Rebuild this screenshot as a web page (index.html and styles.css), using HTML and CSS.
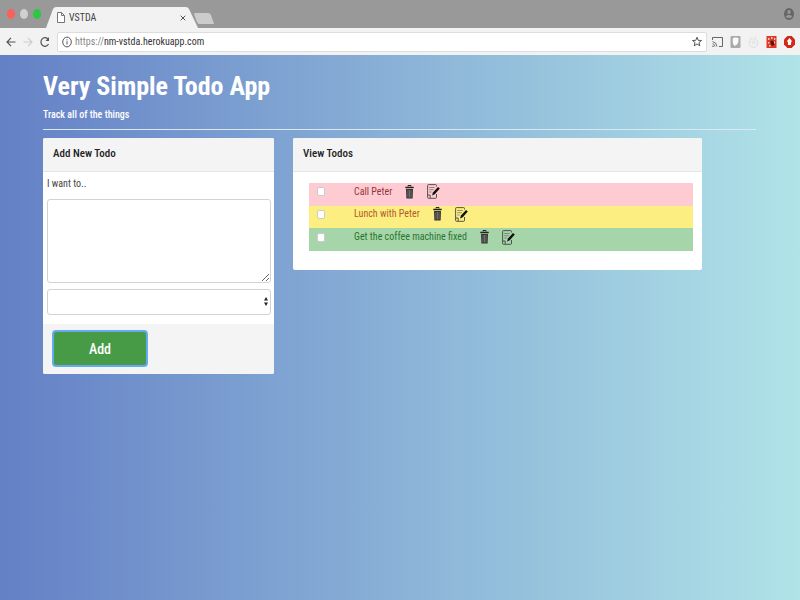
FILE: index.html
```html
<!DOCTYPE html>
<html lang="en">
<head>
<meta charset="utf-8">
<title>VSTDA</title>
<link rel="stylesheet" href="styles.css">
</head>
<body>
<svg class="defs" aria-hidden="true">
  <symbol id="trash" viewBox="0 0 9 14">
    <path d="M3 1.500V.5h3v1" fill="none" stroke="#222"/>
    <path d="M.3 1.700h8.400v1.600H.3z" fill="#222"/>
    <path d="M1 4h7l-.4 9.500H1.400z" fill="#333"/>
    <path d="M3 5v7.500M4.500 5v7.500M6 5v7.500" stroke="#fff" stroke-opacity=".5" stroke-width=".6"/>
  </symbol>
  <symbol id="edit" viewBox="0 0 13 15">
    <path d="M9.500 2.500V1.500Q9.500.6 8.600.6H1.500Q.6.6.6 1.500V13.400q0 .9.9.9h7.100q.9 0 .9-.9V10M.8 11h2.400v3" fill="none" stroke="#444" stroke-width=".9"/>
    <path d="M2.200 3.500h5.500M2.200 5.700h4.500M2.200 8h2.500" stroke="#666" stroke-width=".7"/>
    <path d="M11 3l1.800 1.600-5 5.600-2.700 1.300.8-2.900z" fill="#111"/>
  </symbol>
</svg>
<header class="browser">
  <div class="tabs">
    <span class="light red"></span><span class="light grey"></span><span class="light green"></span>
    <div class="tab">
      <svg class="tab-shape" viewBox="0 0 152 20" preserveAspectRatio="none" aria-hidden="true"><path d="M0 20L7 2q1-2 3-2h130q2 0 3 2l9 18z" fill="#f2f2f2"/></svg>
      <svg class="page-icon" viewBox="0 0 8 11" aria-hidden="true"><path d="M.5.500h4l3 3v7h-7zM4.500.500v3h3" fill="#fff" stroke="#777"/></svg>
      <span class="tab-title">VSTDA</span>
      <button class="close" aria-label="Close tab"><svg width="6" height="6" viewBox="0 0 6 6"><path d="M.7.700l4.600 4.600M5.300.700L.7 5.300" stroke="#555"/></svg></button>
    </div>
    <button class="new-tab" aria-label="New tab"><svg width="20" height="11" viewBox="0 0 20 11"><path d="M1 0h13q2 0 3 2l3 9H5q-1 0-2-2L0 1z" fill="#ccc"/></svg></button>
    <svg class="user" viewBox="0 0 10 12" aria-hidden="true"><ellipse cx="5" cy="6" rx="5" ry="6" fill="#666"/><ellipse cx="5" cy="4" rx="1.600" ry="1.900" fill="#999"/><path d="M1.800 9q.2-2 3.200-2t3.200 2q-3.200 2-6.400 0" fill="#999"/></svg>
  </div>
  <div class="toolbar">
    <svg class="nav" viewBox="0 0 10 10" aria-hidden="true"><path d="M9.500 5h-8M5 .8L1 5l4 4.200" fill="none" stroke="#555" stroke-width="1.200"/></svg>
    <svg class="nav" viewBox="0 0 10 10" aria-hidden="true"><path d="M.5 5h8M5 .8L9 5 5 9.200" fill="none" stroke="#ccc" stroke-width="1.200"/></svg>
    <svg class="nav" viewBox="0 0 10 10" aria-hidden="true"><path d="M8.500 7A4 4.300 0 1 1 7.800 2" fill="none" stroke="#555" stroke-width="1.200"/><path d="M9 0v4H5.500z" fill="#555"/></svg>
    <div class="address">
      <svg class="info" viewBox="0 0 10 12" aria-hidden="true"><ellipse cx="5" cy="6" rx="4.300" ry="4.900" fill="none" stroke="#555"/><path d="M5 5.300v3.200M5 3.300v1.100" stroke="#555"/></svg>
      <span class="url"><span class="scheme">https://</span>nm-vstda.herokuapp.com</span>
      <svg class="star" viewBox="0 0 10 10" aria-hidden="true"><path d="M5 .8l1.200 3 3.300.2L7 6l.8 3.300L5 7.500 2.200 9.300 3 6 .5 4l3.300-.2z" fill="none" stroke="#444" stroke-width=".9"/></svg>
    </div>
    <div class="extensions">
      <svg class="ext" viewBox="0 0 11 12" aria-hidden="true"><path d="M.5 4V1.500h10v9H7" fill="none" stroke="#666"/><path d="M.5 5.500q4 .5 4.500 5M.5 7.500q2 .5 2.500 3" fill="none" stroke="#666" stroke-width=".9"/><circle cx="1" cy="10.200" r=".8" fill="#666"/></svg>
      <svg class="ext" viewBox="0 0 11 12" aria-hidden="true"><rect x=".5" width="10" height="12" rx="1" fill="#aaa"/><path d="M3 2q2.500-.8 5.500 0 .5 4-1.500 6.500L4.500 10Q2 7 3 2" fill="#fafafa"/></svg>
      <svg class="ext" viewBox="0 0 11 12" aria-hidden="true"><g fill="none" stroke="#ddd"><circle cx="5.500" cy="7" r="4.300"/><circle cx="5.500" cy="6.500" r="1.500"/><path d="M1.500 1l2 2M7 1.500l1.500-1"/></g></svg>
      <svg class="ext" viewBox="0 0 11 12" aria-hidden="true"><path d="M.5 0h10v12H.5z" fill="#df3827"/><path d="M2 2h1.500v2H2zM5 1h1.500v2H5zM8 2h1.300v2H8zM2 6h1.500v1.500H2zM8 5.500h1v2H8zM3 9h1.500v1.500H3z" fill="#f8c4bd"/><path d="M4.500 5L7 4.500l1.500 4L6 10 4.500 7z" fill="#4a1712"/></svg>
      <svg class="ext" viewBox="0 0 11 12" aria-hidden="true"><path d="M3.300 0h4.400L11 3.500v5L7.700 12H3.300L0 8.500v-5z" fill="#cf2919"/><path d="M5.500 2l2.800 3.500H7.200L7 9H4l-.2-3.500H2.700z" fill="#fff"/></svg>
    </div>
  </div>
</header>
<main class="page">
  <h1>Very Simple Todo App</h1>
  <p class="tagline">Track all of the things</p>
  <hr>
  <div class="columns">
    <form class="card">
      <h2>Add New Todo</h2>
      <div class="fields">
        <label for="todo">I want to..</label>
        <textarea id="todo"></textarea>
        <div class="select-wrap">
          <select id="priority" aria-label="Priority"><option></option></select>
          <svg class="arrows" viewBox="0 0 4 9" aria-hidden="true"><path d="M2 0l2 3.500H0zM2 9L0 5.500h4z" fill="#222"/></svg>
        </div>
      </div>
      <div class="card-footer"><button class="add" type="button">Add</button></div>
    </form>
    <section class="card">
      <h2>View Todos</h2>
      <ul class="todos">
        <li class="high"><input type="checkbox" id="t1"><label for="t1">Call Peter</label><button aria-label="Delete"><svg class="trash"><use href="#trash"/></svg></button><button aria-label="Edit"><svg class="edit"><use href="#edit"/></svg></button></li>
        <li class="medium"><input type="checkbox" id="t2"><label for="t2">Lunch with Peter</label><button aria-label="Delete"><svg class="trash"><use href="#trash"/></svg></button><button aria-label="Edit"><svg class="edit"><use href="#edit"/></svg></button></li>
        <li class="low"><input type="checkbox" id="t3"><label for="t3">Get the coffee machine fixed</label><button aria-label="Delete"><svg class="trash"><use href="#trash"/></svg></button><button aria-label="Edit"><svg class="edit"><use href="#edit"/></svg></button></li>
      </ul>
    </section>
  </div>
</main>
</body>
</html>
```
FILE: styles.css
```css
* { box-sizing: border-box; }
body {
  margin: 0;
  min-height: 100vh;
  display: flex;
  flex-direction: column;
  font: 10px/16px "Roboto Condensed", Roboto, sans-serif;
  color: #444;
}
button { padding: 0; border: 0; background: none; font: inherit; }
svg { display: block; flex: none; }
.defs { position: absolute; width: 0; height: 0; }

.tabs {
  display: flex;
  align-items: center;
  height: 28px;
  padding: 0 6px 0 7px;
  background: #999;
}
.light { width: 8px; height: 10px; margin-right: 5px; border-radius: 50%; }
.red { background: #fc605b; }
.grey { background: #d0d0d0; }
.green { background: #2bc840; }
.tab {
  position: relative;
  display: flex;
  align-items: center;
  align-self: flex-end;
  width: 152px;
  height: 21px;
  padding: 0 12px 0 11px;
}
.tab-shape { position: absolute; inset: 0; width: 100%; height: 100%; }
.page-icon { position: relative; width: 8px; height: 11px; }
.tab-title { position: relative; margin-left: 4px; }
.close { position: relative; margin-left: auto; }
.new-tab { margin: 8px 0 0 -4px; }
.user { width: 10px; height: 12px; margin-left: auto; }

.toolbar {
  display: flex;
  align-items: center;
  gap: 7px;
  height: 27px;
  padding: 0 6px;
  background: #f2f2f2;
}
.nav { width: 10px; height: 10px; }
.address {
  flex: 1;
  display: flex;
  align-items: center;
  height: 20px;
  padding: 0 4px;
  border: 1px solid #ddd;
  border-radius: 2px;
  background: #fff;
}
.info { width: 10px; height: 12px; }
.url { margin-left: 3px; color: #333; }
.scheme { color: #888; }
.star { width: 10px; height: 11px; margin-left: auto; }
.extensions { display: flex; gap: 7px; margin: 0 -1px 0 -2px; }
.ext { width: 11px; height: 12px; }

.page {
  flex: 1;
  padding: 15px 44px 0 43px;
  background: linear-gradient(to right, #6480c6, #b0e3e8);
}
h1 { margin: 0; font-size: 26px; line-height: 32px; font-weight: 700; color: #fff; }
.tagline { margin: 5px 0 6px; color: #fff; font-weight: 500; }
hr { height: 1px; margin: 0 0 8px; border: 0; background: #d9e8f5; }
.columns {
  display: grid;
  grid-template-columns: 231fr 409fr 35fr;
  gap: 19px;
  align-items: start;
}
.card { border-radius: 2px; background: #fff; overflow: hidden; }
h2 {
  margin: 0;
  padding: 8px 10px 9px;
  border-bottom: 1px solid #e6e6e6;
  background: #f4f4f4;
  color: #222;
  font-size: 11px;
  font-weight: 500;
  line-height: 16px;
}
.fields { padding: 4px 3px 9px 4px; }
.fields label { display: block; margin-bottom: 7px; }
textarea, select {
  display: block;
  width: 100%;
  border: 1px solid #d2d2d2;
  border-radius: 3px;
  background: #fff;
}
textarea { height: 84px; resize: vertical; }
.select-wrap { position: relative; margin-top: 6px; }
select { height: 26px; appearance: none; }
.arrows { position: absolute; right: 3px; top: 8px; width: 4px; height: 9px; }
.card-footer { padding: 6px 9px 7px; background: #f4f4f4; }
.add {
  display: block;
  width: 96px;
  height: 37px;
  border: 2px solid #66abf2;
  border-radius: 4px;
  background: #479b47;
  color: #fff;
  font-size: 14px;
  font-weight: 500;
}
.todos {
  display: grid;
  grid-auto-rows: 1fr;
  height: 68px;
  margin: 11px 9px 19px 16px;
  padding: 0;
  list-style: none;
}
.todos li { display: flex; align-items: center; padding: 0 0 5px 8px; }
.todos input {
  appearance: none;
  width: 8px;
  height: 9px;
  margin: 0 29px 0 0;
  border: 1px solid #ccc;
  border-radius: 2px;
  background: #fff;
}
.todos button { margin-left: 13px; }
.trash { width: 9px; height: 14px; }
.edit { width: 13px; height: 15px; }
.high { background: #fdcbd1; color: #96343c; }
.medium { background: #fcee80; color: #b5592c; }
.low { background: #a6d5aa; color: #28762d; }
```
